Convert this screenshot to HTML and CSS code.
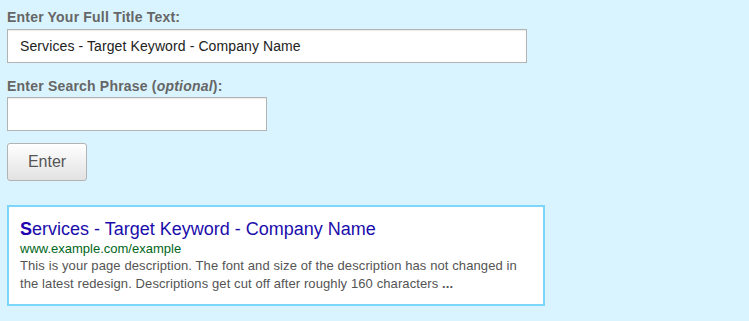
FILE: index.html
```html
<html>
<head>
<title>
Title Tag Preview
</title>
<link rel="stylesheet" href="styles.css">
</head>

<body>

<div class="tool">
<label class="field-label" for="title-input">Enter Your Full Title Text:</label>
<input type="text" id="title-input" class="title-input" value="Services - Target Keyword - Company Name">

<label class="field-label second" for="phrase-input">Enter Search Phrase (<em>optional</em>):</label>
<input type="text" id="phrase-input" class="phrase-input">

<button id="enter-btn" class="enter-btn">Enter</button>

<div class="preview">
<div class="preview-title"><b>S</b>ervices - Target Keyword - Company Name</div>
<div class="preview-url">www.example.com/example</div>
<div class="preview-desc">This is your page description. The font and size of the description has not changed in the latest redesign. Descriptions get cut off after roughly 160 characters <b>...</b></div>
</div>
</div>

</body>
</html>
```

FILE: styles.css
```css
body{
margin: 0;
background-color: #d9f4fe;
font-family: "Liberation Sans", Arial, sans-serif;
}
.tool{
padding: 8px 7px;
}
.field-label{
display: block;
font-size: 14px;
font-weight: bold;
line-height: 18px;
letter-spacing: 0.2px;
color: #666666;
margin-bottom: 3px;
}
.field-label em{
font-style: italic;
}
.field-label.second{
margin-top: 14px;
margin-bottom: 2px;
}
.title-input,
.phrase-input{
display: block;
box-sizing: border-box;
height: 34px;
padding: 0 12px;
font-family: "Liberation Sans", Arial, sans-serif;
font-size: 14px;
letter-spacing: 0.1px;
color: #222222;
background-color: #ffffff;
border: 1px solid #b3b3b3;
box-shadow: inset 0 1px 1px rgba(0, 0, 0, 0.08);
outline: none;
}
.title-input{
width: 520px;
}
.phrase-input{
width: 260px;
}
.enter-btn{
display: block;
box-sizing: border-box;
width: 80px;
height: 38px;
margin-top: 12px;
padding: 0;
font-family: "Liberation Sans", Arial, sans-serif;
font-size: 16px;
color: #555555;
background: linear-gradient(#ffffff, #e2e2e2);
border: 1px solid #b3b3b3;
border-radius: 3px;
}
.preview{
box-sizing: border-box;
width: 538px;
height: 101px;
margin-top: 24px;
padding: 12px 22px 10px 11px;
background-color: #ffffff;
border: 2px solid #7dd7fb;
}
.preview-title{
font-size: 18px;
line-height: 21px;
color: #1a0dab;
}
.preview-title b{
color: #2200b0;
}
.preview-url{
font-size: 13px;
line-height: 17px;
color: #006621;
}
.preview-desc{
font-size: 13px;
line-height: 18px;
letter-spacing: 0.1px;
color: #545454;
}
```
